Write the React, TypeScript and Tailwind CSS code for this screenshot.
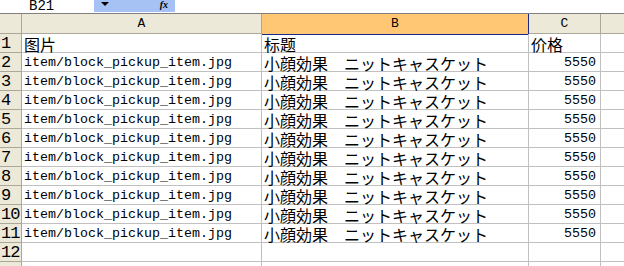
import React from "react";

const mono = "font-['Liberation_Mono','Noto_Sans_CJK_JP',monospace]";
const cjk = "font-['Noto_Sans_CJK_JP','Noto_Sans_CJK_SC',sans-serif]";

const rows = Array.from({ length: 10 }, () => ({
  a: "item/block_pickup_item.jpg",
  b: "小顔効果　ニットキャスケット",
  c: "5550",
}));

const cols = "grid grid-cols-[22px_240px_267px_72px_1fr]";

export default function App() {
  return (
    <div className="w-[624px] h-[266px] overflow-hidden bg-white text-black select-none">
      {/* formula bar */}
      <div className="flex h-[14px] border-b border-[#808080]">
        <div className={`w-[94px] h-[12px] pl-[29px] ${mono} text-[14px] leading-[12px]`}>
          B21
        </div>
        <div className="w-[81px] h-[12px] bg-[#a6c2f4] flex items-start justify-between px-[7px]">
          <svg width="9" height="6" viewBox="0 0 9 6" className="mt-[2px]">
            <path d="M0 0h8L4 4z" fill="#000" />
          </svg>
          <span className="font-['Liberation_Serif',serif] italic font-bold text-[10px] leading-[10px]">fx</span>
        </div>
      </div>

      {/* column headers */}
      <div className={`${cols} h-[20px] bg-[#ece9d8] border-b border-[#aca899] ${mono} text-[13px]`}>
        <div className="border-r border-[#aca899]" />
        <div className="border-r border-[#aca899] flex items-center justify-center">A</div>
        <div className="bg-[#ffc774] border-r border-[#1a2a8a] border-b border-b-[#1a2a8a] -mb-px flex items-center justify-center">B</div>
        <div className="border-r border-[#aca899] flex items-center justify-center">C</div>
        <div />
      </div>

      {/* row 1 */}
      <Row n="1">
        <Cell className={`${cjk} text-[16px] leading-[16px]`}>图片</Cell>
        <Cell className={`${cjk} text-[16px] leading-[16px]`}>标题</Cell>
        <Cell className={`${cjk} text-[16px] leading-[16px]`}>价格</Cell>
      </Row>

      {rows.map((r, i) => (
        <Row key={i} n={String(i + 2)}>
          <Cell className={`${mono} text-[13.33px] leading-[16px]`}>{r.a}</Cell>
          <Cell className={`${cjk} text-[16px] leading-[16px]`}>{r.b}</Cell>
          <Cell className={`${mono} text-[13.33px] leading-[16px] justify-end pr-[4px]`}>{r.c}</Cell>
        </Row>
      ))}

      <Row n="12">
        <Cell />
        <Cell />
        <Cell />
      </Row>
      <Row n="">
        <Cell />
        <Cell />
        <Cell />
      </Row>
    </div>
  );
}

function Row({ n, children }: { n: string; children: React.ReactNode }) {
  return (
    <div className={`${cols} h-[19px]`}>
      <div className={`bg-[#ece9d8] border-r border-b border-[#aca899] ${mono} text-[17px] leading-[17px] flex items-end pl-[1px] tracking-[-1px]`}>
        {n}
      </div>
      {children}
      <div className="border-b border-[#c0c0c0]" />
    </div>
  );
}

function Cell({ className = "", children }: { className?: string; children?: React.ReactNode }) {
  return (
    <div className={`border-r border-b border-[#c0c0c0] flex items-end pl-[2px] whitespace-nowrap ${className}`}>
      {children}
    </div>
  );
}
